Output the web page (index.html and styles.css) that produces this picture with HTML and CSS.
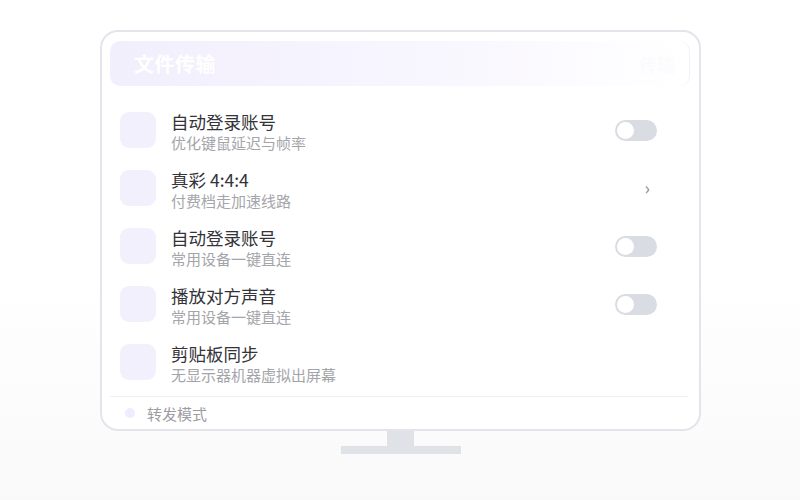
FILE: index.html
```html
<!DOCTYPE html>
<html lang="zh">
<head>
<meta charset="utf-8">
<link rel="stylesheet" href="styles.css">
</head>
<body>
<div class="stage">
  <div class="monitor">
    <div class="header">
      <span class="header-title">文件传输</span>
      <span class="header-ghost">传输</span>
    </div>
    <div class="list">
      <div class="row">
        <div class="row-icon"></div>
        <div class="row-text">
          <div class="row-title">自动登录账号</div>
          <div class="row-sub">优化键鼠延迟与帧率</div>
        </div>
        <div class="row-ctrl"><span class="toggle"><span class="knob"></span></span></div>
      </div>
      <div class="row">
        <div class="row-icon"></div>
        <div class="row-text">
          <div class="row-title">真彩 4:4:4</div>
          <div class="row-sub">付费档走加速线路</div>
        </div>
        <div class="row-ctrl"><span class="chevron">›</span></div>
      </div>
      <div class="row">
        <div class="row-icon"></div>
        <div class="row-text">
          <div class="row-title">自动登录账号</div>
          <div class="row-sub">常用设备一键直连</div>
        </div>
        <div class="row-ctrl"><span class="toggle"><span class="knob"></span></span></div>
      </div>
      <div class="row">
        <div class="row-icon"></div>
        <div class="row-text">
          <div class="row-title">播放对方声音</div>
          <div class="row-sub">常用设备一键直连</div>
        </div>
        <div class="row-ctrl"><span class="toggle"><span class="knob"></span></span></div>
      </div>
      <div class="row">
        <div class="row-icon"></div>
        <div class="row-text">
          <div class="row-title">剪贴板同步</div>
          <div class="row-sub">无显示器机器虚拟出屏幕</div>
        </div>
        <div class="row-ctrl"></div>
      </div>
    </div>
    <div class="footer">
      <span class="footer-dot"></span>
      <span class="footer-text">转发模式</span>
    </div>
  </div>
  <div class="neck"></div>
  <div class="base"></div>
</div>
</body>
</html>
```
FILE: styles.css
```css
html, body {
  margin: 0;
  padding: 0;
}
body {
  width: 800px;
  height: 500px;
  background: linear-gradient(180deg, #ffffff 0%, #ffffff 55%, #f9f9fa 100%);
  font-family: "Noto Sans CJK SC", "Noto Sans", sans-serif;
  overflow: hidden;
}
.stage {
  display: flex;
  flex-direction: column;
  align-items: center;
  padding-top: 30px;
  padding-left: 1px;
}
.monitor {
  box-sizing: border-box;
  width: 601px;
  height: 401px;
  border: 2px solid #e3e5ea;
  border-radius: 18px;
  background: #ffffff;
  padding: 9px 9px 0 8px;
  display: flex;
  flex-direction: column;
}
.header {
  flex: none;
  height: 45px;
  box-sizing: border-box;
  border-radius: 10px;
  background: linear-gradient(90deg, #f2effd 0%, #f7f5fe 50%, #fdfcff 85%, #ffffff 100%);
  display: flex;
  align-items: center;
  justify-content: space-between;
  padding: 0 14px 0 24px;
  border-right: 1px solid #f1f1f5;
}
.header-title {
  color: #ffffff;
  font-size: 20px;
  font-weight: 700;
  letter-spacing: 0.5px;
}
.header-ghost {
  color: #fbfbfd;
  font-size: 18px;
  font-weight: 700;
}
.list {
  flex: none;
  display: flex;
  flex-direction: column;
  padding: 15px 0 0 10px;
}
.row {
  height: 58px;
  display: flex;
  align-items: center;
}
.row-icon {
  width: 36px;
  height: 36px;
  border-radius: 9px;
  background: #f3f0fe;
  flex: none;
}
.row-text {
  flex: 1;
  margin-left: 15px;
  display: flex;
  flex-direction: column;
  margin-top: 4px;
}
.row-title {
  font-size: 17.5px;
  line-height: 22px;
  color: #333338;
}
.row-sub {
  font-size: 15px;
  line-height: 20px;
  color: #a4a5aa;
}
.row-ctrl {
  width: 42px;
  margin-right: 33px;
  display: flex;
  justify-content: flex-end;
  align-items: center;
  flex: none;
}
.toggle {
  box-sizing: border-box;
  width: 42px;
  height: 21px;
  border-radius: 11px;
  background: #d9dce2;
  padding: 2px;
  display: flex;
  align-items: center;
}
.knob {
  width: 17px;
  height: 17px;
  border-radius: 50%;
  background: #ffffff;
}
.chevron {
  color: #8a8c94;
  font-size: 18px;
  line-height: 18px;
  margin-right: 7px;
  margin-top: -2px;
}
.footer {
  flex: none;
  margin-top: 5px;
  border-top: 1px solid #eeeff3;
  margin-right: 2px;
  height: 32px;
  display: flex;
  align-items: center;
  padding-left: 15px;
}
.footer-dot {
  width: 10px;
  height: 10px;
  border-radius: 50%;
  background: #efecfd;
}
.footer-text {
  margin-left: 12px;
  font-size: 15px;
  color: #9c9da3;
}
.neck {
  width: 27px;
  height: 15px;
  background: #dfe2e7;
}
.base {
  width: 120px;
  height: 8px;
  background: #dfe2e7;
}
```
